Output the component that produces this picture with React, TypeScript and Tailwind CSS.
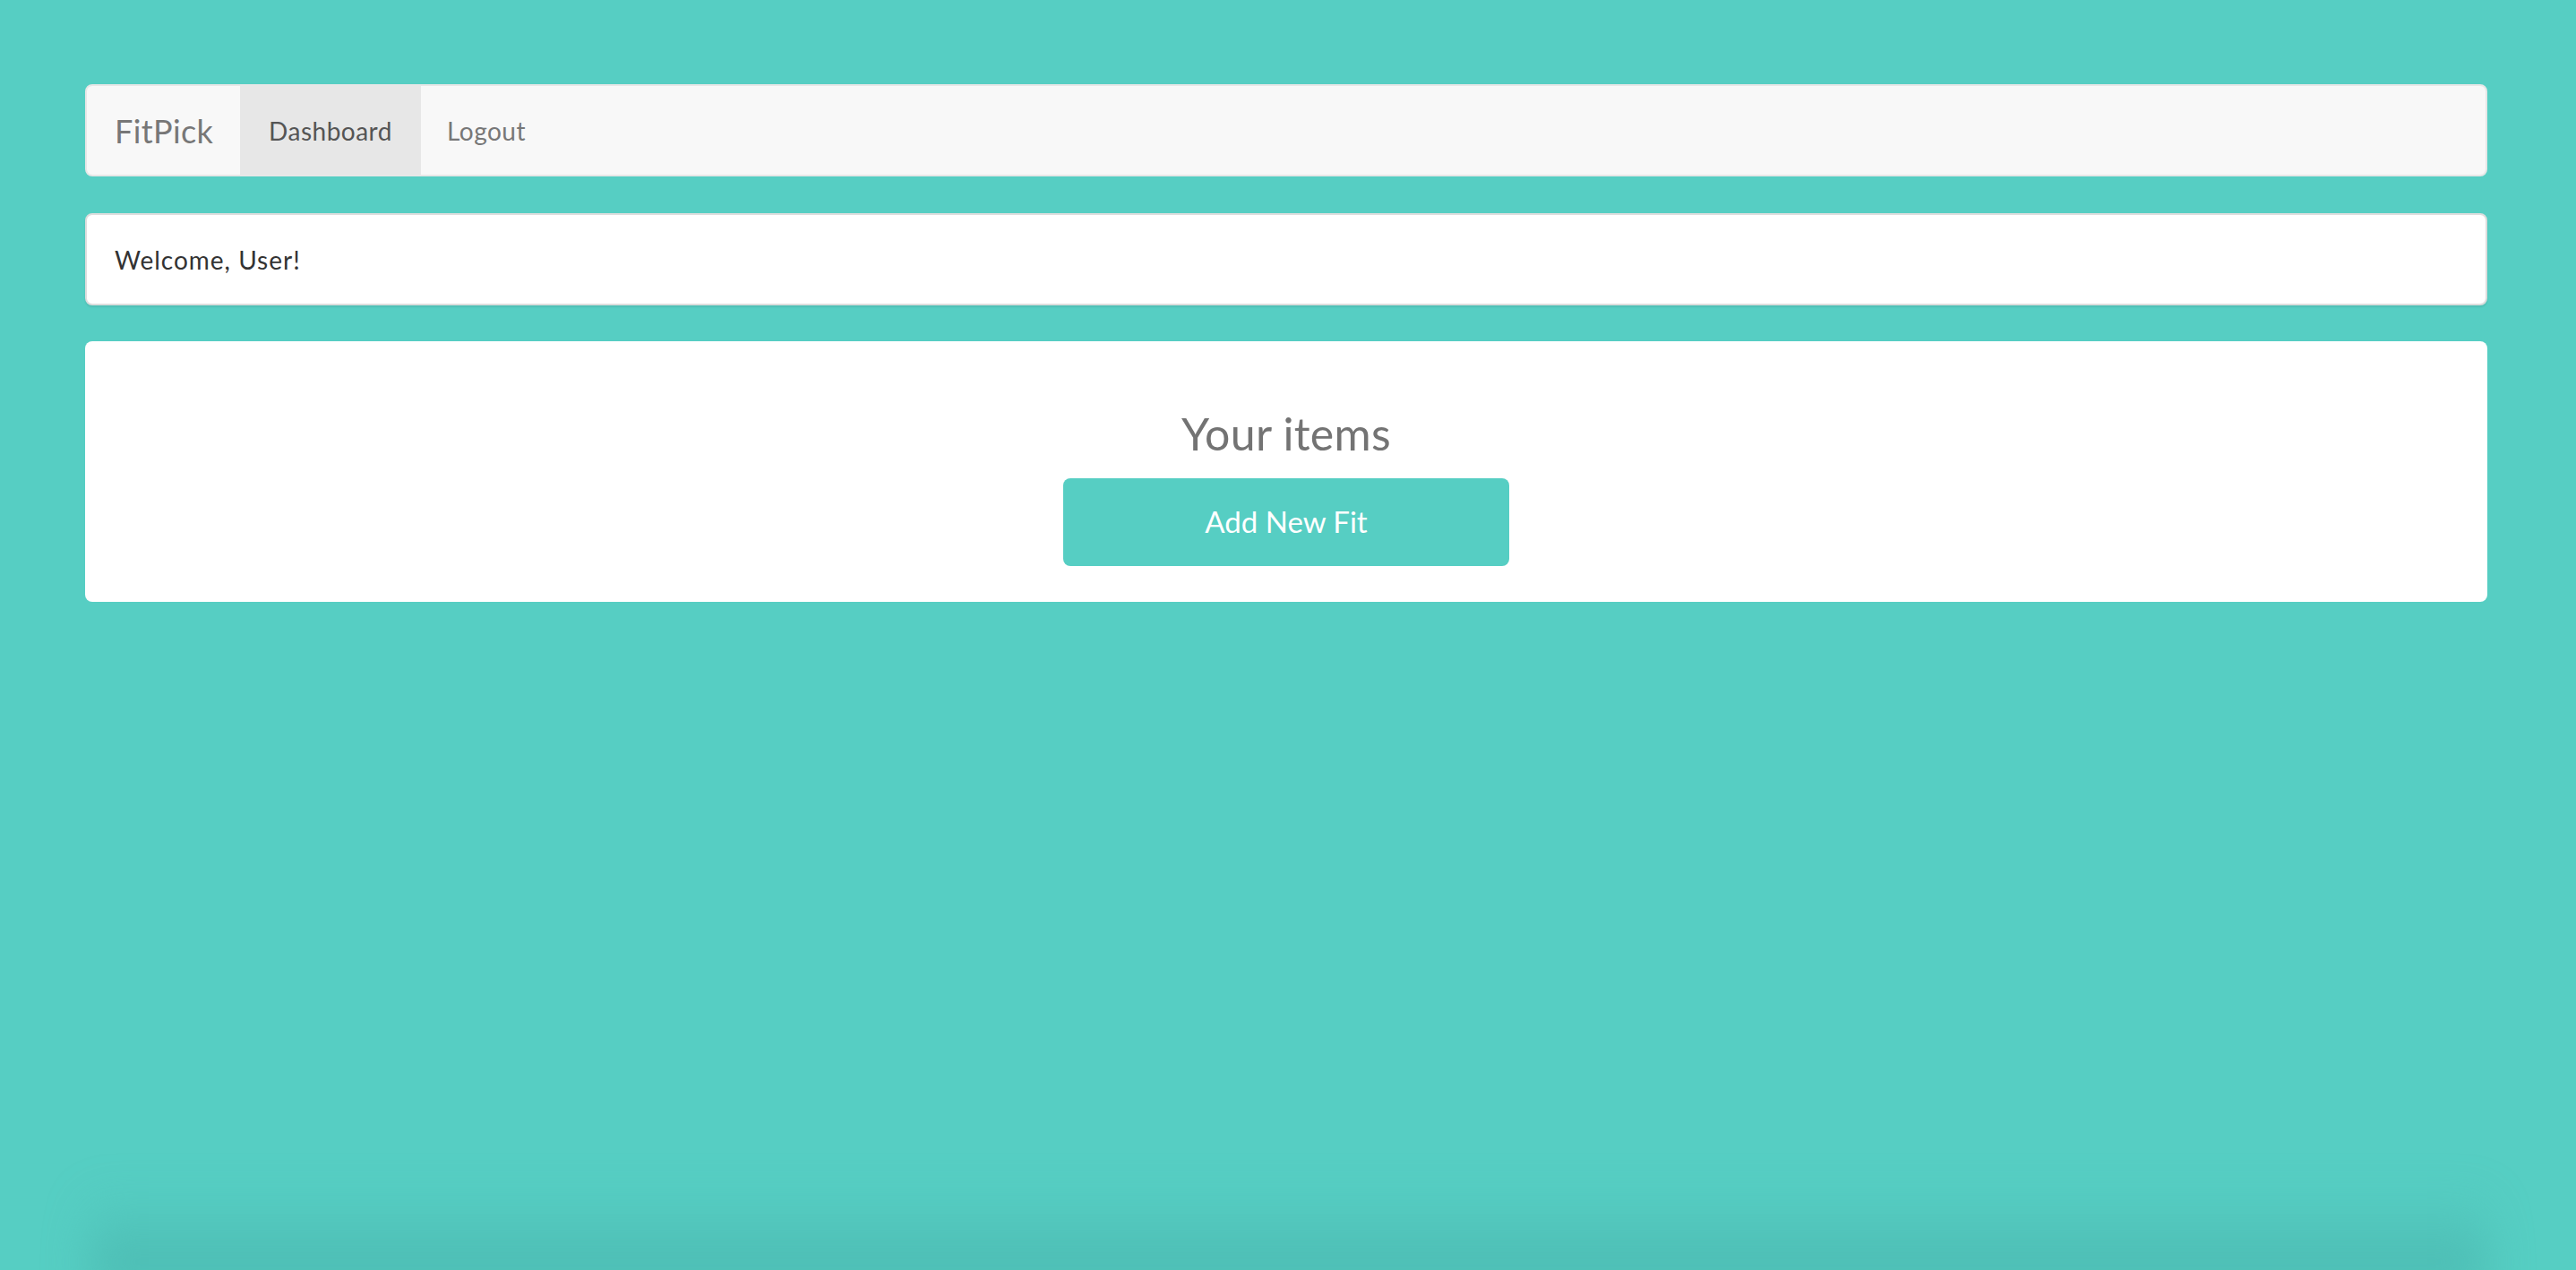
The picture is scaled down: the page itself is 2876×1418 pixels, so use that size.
import React from 'react';

const font = { fontFamily: 'Lato, "Open Sans", sans-serif' };

const Navbar: React.FC = () => (
  <nav className="flex h-[103px] rounded-lg border-2 border-[#e7e7e7] bg-[#f8f8f8]">
    <a className="flex w-[171px] items-center pl-[31px] text-[36px] tracking-[0.4px] text-[#777]">FitPick</a>
    <a className="flex w-[202px] items-center justify-center bg-[#e7e7e7] text-[28px] tracking-[0.5px] text-[#555]">Dashboard</a>
    <a className="flex items-center px-[29px] text-[28px] tracking-[0.5px] text-[#777]">Logout</a>
  </nav>
);

export default function App() {
  return (
    <div className="flex min-h-screen flex-col overflow-hidden bg-[#56cec3]" style={font}>
      <div className="flex flex-col pl-[95px] pr-[99px] pt-[94px]">
        <Navbar />

        {/* welcome */}
        <div className="mt-[41px] flex h-[103px] items-center rounded-lg border-2 border-[#dddddd] bg-white pl-[31px] text-[28px] tracking-[1px] text-[#333] shadow-[0_2px_2px_rgba(0,0,0,0.08)]">
          Welcome, User!
        </div>

        {/* items */}
        <div className="mt-[40px] flex flex-col items-center rounded-lg bg-white pb-[40px] pt-[76px]">
          <h3 className="text-[50px] leading-[55px] tracking-[0.3px] text-[#737373]">Your items</h3>
          <button className="mt-[22px] flex h-[98px] w-[498px] items-center justify-center rounded-lg bg-[#56cec3] text-[33px] text-white">
            Add New Fit
          </button>
        </div>
      </div>

      <div className="flex-1" />
      {/* window shadow at the bottom edge */}
      <div className="mx-[100px] -mb-[20px] h-[110px] bg-gradient-to-b from-transparent to-[#4bb8b0] blur-xl" />
    </div>
  );
}
